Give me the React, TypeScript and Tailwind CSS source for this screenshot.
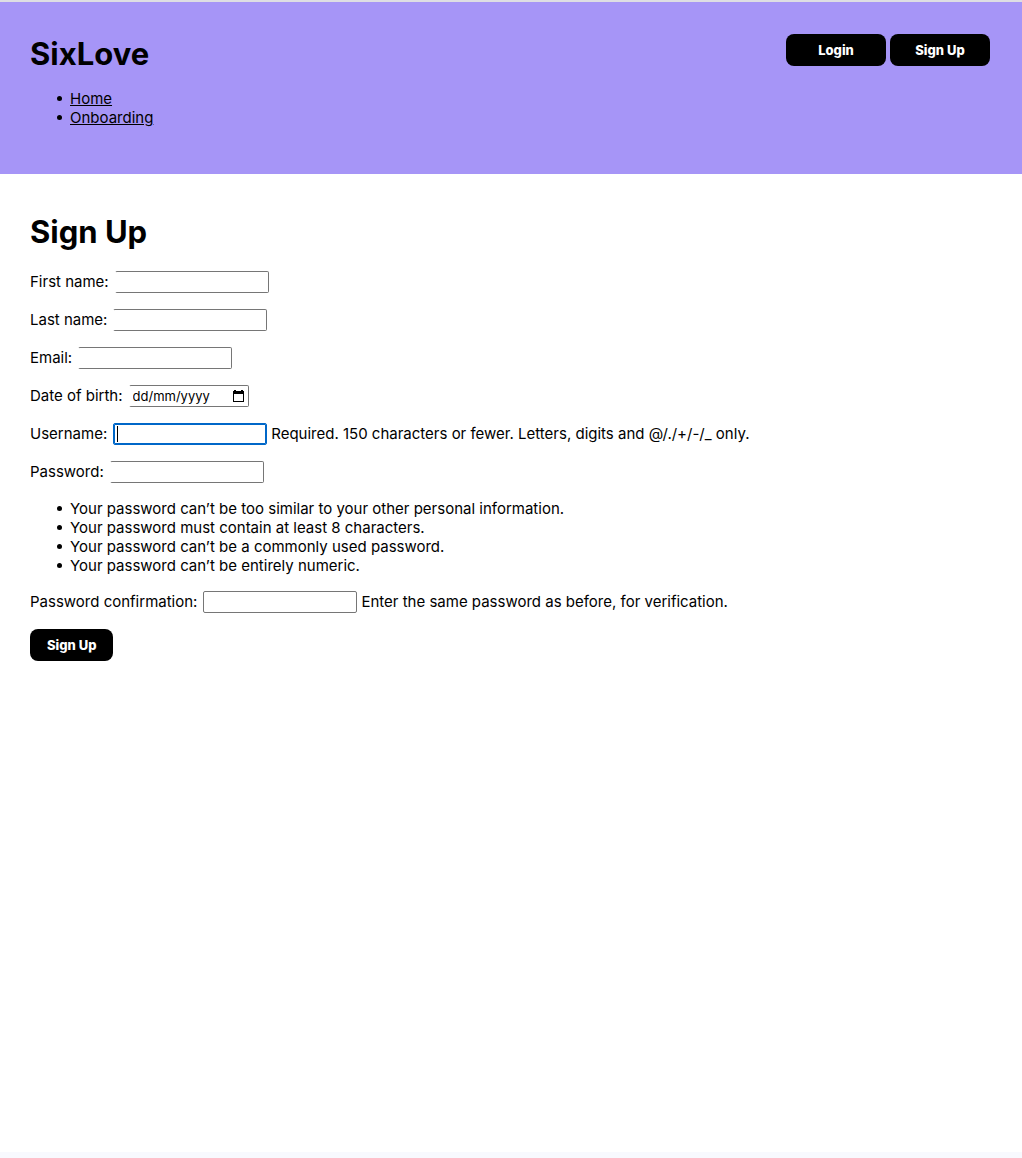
import { useRef, useState } from "react";
import type { ReactNode } from "react";

const field =
  "h-[22px] w-[154px] rounded-[2px] border border-[#767676] bg-white px-[3px] text-[13px] outline-none focus:border-[#0067c8] focus:ring-1 focus:ring-inset focus:ring-[#0067c8]";
const openField = `${field} border-l-white focus:border-l-[#0067c8]`;
const bullet = "flex items-center gap-2 before:size-[5px] before:shrink-0 before:rounded-full before:bg-black";
const button = "h-8 rounded-lg bg-black text-[13px] font-extrabold text-white";

function Row({ id, label, help, children }: { id: string; label: string; help?: string; children: ReactNode }) {
  return (
    <div className="mb-4 flex items-start gap-1 leading-[21px]">
      <label htmlFor={id} className="pr-0.5">{label}</label>
      {children}
      {help && <span>{help}</span>}
    </div>
  );
}

export default function App() {
  const [username, setUsername] = useState("");
  const [focused, setFocused] = useState(true);
  const dob = useRef<HTMLInputElement>(null);
  return (
    <div className="flex min-h-screen flex-col bg-white font-['Inter',sans-serif] text-[15px] leading-[19px] text-black">
      <header className="flex items-start justify-between border-t-2 border-[#dedee3] bg-[#a695f7] pb-[47px] pl-[30px] pr-8 pt-8">
        <div>
          <h1 className="text-[31px] font-bold leading-10">SixLove</h1>
          <nav className="mt-[15px]">
            <ul className="pl-[27px]">
              <li className={bullet}><a href="#home" className="underline">Home</a></li>
              <li className={bullet}><a href="#onboarding" className="underline">Onboarding</a></li>
            </ul>
          </nav>
        </div>
        <div className="flex gap-1">
          <button type="button" className={`${button} w-[100px]`}>Login</button>
          <button type="button" className={`${button} w-[100px]`}>Sign Up</button>
        </div>
      </header>
      <main className="grow px-[30px] pt-[38px]">
        <h2 className="mb-[19px] text-[31px] font-bold leading-10">Sign Up</h2>
        <form onSubmit={(e) => e.preventDefault()}>
          <Row id="first" label="First name:"><input id="first" type="text" className={openField} /></Row>
          <Row id="last" label="Last name:"><input id="last" type="text" className={openField} /></Row>
          <Row id="email" label="Email:"><input id="email" type="email" className={openField} /></Row>
          <Row id="dob" label="Date of birth:">
            <div className="flex h-[22px] w-[120px] items-center justify-between rounded-[2px] border border-[#767676] border-l-white pl-[3px] pr-1">
              <input ref={dob} id="dob" type="text" placeholder="dd/mm/yyyy" className="h-full w-24 bg-transparent text-[13px] outline-none placeholder:text-black" />
              <button type="button" aria-label="Choose date" onClick={() => dob.current?.focus()}>
                <svg width="11" height="12" viewBox="0 0 11 12" className="block">
                  <path d="M1 0h2v1h5V0h2v1h1v11H0V1h1zM1 4v7h9V4z" fill="black" fillRule="evenodd" />
                </svg>
              </button>
            </div>
          </Row>
          <Row id="username" label="Username:" help="Required. 150 characters or fewer. Letters, digits and @/./+/-/_ only.">
            <div className="relative flex">
              <input
                id="username"
                type="text"
                autoFocus
                value={username}
                onFocus={() => setFocused(true)}
                onBlur={() => setFocused(false)}
                onChange={(e) => setUsername(e.target.value)}
                className={`${field} ${username ? "" : "caret-transparent"}`}
              />
              {focused && !username && <span className="pointer-events-none absolute left-1 top-[3px] h-4 w-px bg-black" />}
            </div>
          </Row>
          <Row id="password" label="Password:"><input id="password" type="password" className={openField} /></Row>
          <ul className="mb-4 pl-[27px]">
            <li className={bullet}>Your password can’t be too similar to your other personal information.</li>
            <li className={bullet}>Your password must contain at least 8 characters.</li>
            <li className={bullet}>Your password can’t be a commonly used password.</li>
            <li className={bullet}>Your password can’t be entirely numeric.</li>
          </ul>
          <Row id="confirm" label="Password confirmation:" help="Enter the same password as before, for verification.">
            <input id="confirm" type="password" className={field} />
          </Row>
          <button type="submit" className={`${button} px-[17px]`}>Sign Up</button>
        </form>
      </main>
      <footer className="h-1.5 bg-[#f8f9fe]" />
    </div>
  );
}
